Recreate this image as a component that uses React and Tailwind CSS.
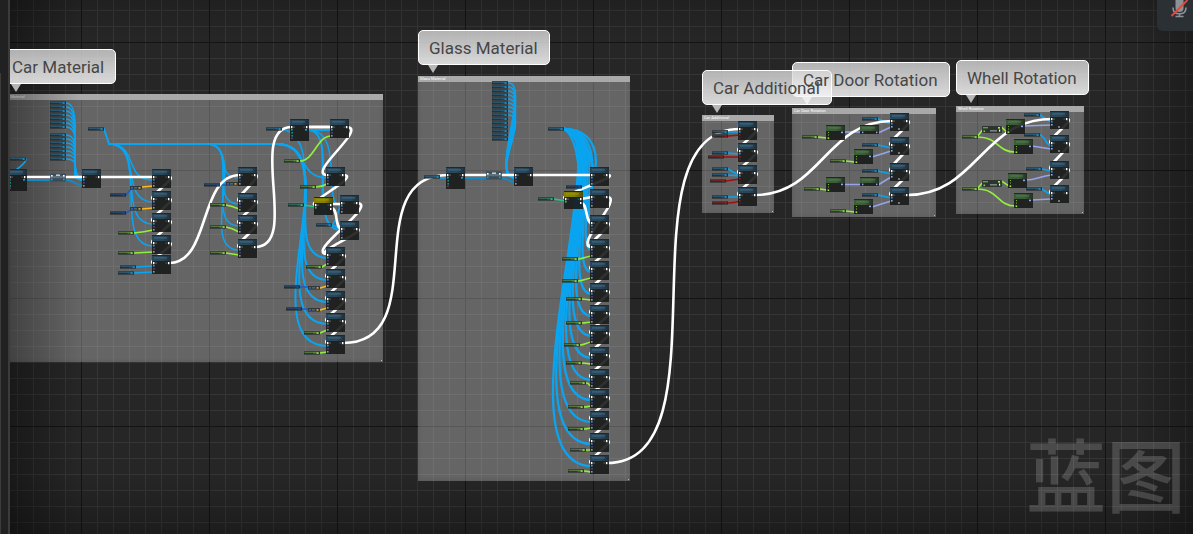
import React from "react";

const BLUE = "#0aa4f0";
const GREEN = "#92ee3c";
const YELLOW = "#f5b921";
const NAVY = "#1f5cc0";
const RED = "#a30d10";
const TEAL = "#22c58c";
const LILAC = "#97a4ea";
const WHITE = "#ffffff";

const comments = [
  { title: "Car Material", box: "left-[1px] top-[94px] w-[382px] h-[268px]", bubble: "left-[1px] top-[49px]" },
  { title: "Glass Material", box: "left-[418px] top-[76px] w-[212px] h-[405px]", bubble: "left-[418px] top-[30px]" },
  { title: "Car Door Rotation", box: "left-[792px] top-[108px] w-[144px] h-[109px]", bubble: "left-[792px] top-[62px]" },
  { title: "Car Additional", box: "left-[702px] top-[115px] w-[72px] h-[98px]", bubble: "left-[702px] top-[70px]" },
  { title: "Whell Rotation", box: "left-[956px] top-[106px] w-[128px] h-[108px]", bubble: "left-[956px] top-[60px]" },
];

const steps = (from, count) => Array.from({ length: count }, (_, i) => from + i * 4);

// Green inputs of the long glass column: getter x, getter y, node y
const glassInputs = [
  [562, 257, 239], [562, 279, 261], [566, 297, 283], [566, 321, 305], [564, 343, 325],
  [566, 361, 347], [570, 381, 369], [568, 405, 389], [568, 427, 411], [570, 448, 433], [568, 469, 455],
];
const glassRows = [167, 189, 215, 239, 261, 283, 305, 325, 347, 369, 389, 411, 433, 455];

// x, y, height, kind
const nodes = [
  [8, 169, 22, "tall"], [82, 169, 19, "call"],
  ...[169, 191, 213, 235, 255].map((y) => [152, y, 19, "call"]),
  ...[167, 193, 215, 239].map((y) => [238, y, 19, "call"]),
  [290, 119, 22, "tall"], [330, 119, 19, "call"], [326, 167, 19, "call"],
  [314, 197, 18, "branch"], [340, 195, 19, "call"], [340, 221, 19, "call"],
  ...[247, 269, 291, 313, 335].map((y) => [326, y, 19, "call"]),
  [446, 167, 22, "tall"], [514, 167, 19, "call"], [564, 191, 18, "branch"],
  ...glassRows.map((y) => [590, y, 19, "call"]),
  ...[121, 143, 165, 187].map((y) => [738, y, 19, "red"]),
  ...[113, 137, 163, 187].map((y) => [890, y, 18, "rotate"]),
  ...[111, 135, 161, 185].map((y) => [1050, y, 18, "rotate"]),
  [826, 125, 15, "make"], [860, 125, 9, "pure"], [854, 149, 15, "make"],
  [826, 177, 15, "make"], [860, 177, 9, "pure"], [854, 199, 15, "make"],
  [1006, 119, 15, "make"], [1014, 139, 15, "make"],
  [1008, 173, 15, "make"], [1014, 193, 15, "make"],
];

// x, y, colour
const getters = [
  ...[...steps(101, 7), ...steps(133, 7)].map((y) => [50, y, "blue"]),
  ...steps(81, 15).map((y) => [492, y, "blue"]),
  ...glassInputs.map(([x, y]) => [x, y, "green"]),
  [88, 127, "blue"], [10, 157, "blue"], [110, 193, "navy"], [110, 211, "navy"],
  [118, 231, "green"], [118, 251, "green"], [120, 265, "blue"], [118, 271, "blue"],
  [204, 183, "navy"], [210, 203, "green"], [210, 225, "green"], [210, 251, "green"],
  [266, 127, "blue"], [284, 159, "green"], [300, 185, "green"], [288, 203, "teal"],
  [316, 223, "blue"], [306, 265, "green"], [284, 285, "navy"], [286, 307, "navy"],
  [304, 331, "green"], [304, 351, "green"],
  [548, 127, "blue"], [424, 175, "blue"], [566, 185, "navy"], [538, 197, "teal"],
  [712, 130, "blue"], [712, 134, "red"], [712, 151, "blue"], [708, 155, "red"],
  [712, 167, "blue"], [712, 173, "blue"], [710, 179, "red"], [712, 195, "blue"], [712, 201, "red"],
  [862, 117, "blue"], [862, 143, "blue"], [862, 169, "blue"], [862, 193, "blue"],
  [802, 135, "green"], [830, 159, "green"], [804, 187, "green"], [830, 209, "green"],
  [1024, 113, "blue"], [1024, 133, "blue"], [1026, 167, "blue"], [1026, 187, "blue"],
  [962, 135, "green"], [962, 187, "green"],
];

const converters = [[130, 186], [130, 207], [226, 182], [308, 286], [308, 308]];

const wire = (x1, y1, x2, y2, k1, k2 = k1) =>
  `M${x1} ${y1}C${x1 + k1} ${y1} ${x2 - k2} ${y2} ${x2} ${y2}`;

const chain = (x, rows, off = 8) =>
  rows.slice(1).map((y, i) => [wire(x + 17, rows[i] + off, x + 2, y + off, 10), WHITE, 2.6]);

const wires = [
  // data: car material
  ...[...steps(103, 7), ...steps(135, 7)].map((y) => [wire(66, y, 84, 180, 20), BLUE, 1.4]),
  ["M104 129L109 144", BLUE, 2],
  ["M109 144H282", BLUE, 1.8],
  [wire(109, 144, 153, 180, 30), BLUE, 1.5], [wire(109, 144, 153, 202, 34), BLUE, 1.5],
  [wire(109, 144, 153, 224, 38), BLUE, 1.5], [wire(109, 144, 153, 246, 42), BLUE, 1.5],
  ["M26 159C26 163 21 166 17 169", BLUE, 1.6],
  ["M27 180H51", "#148ac4", 2], [wire(66, 180, 84, 186, 8), "#148ac4", 2],
  ["M126 195L131 189", NAVY, 1.6], ["M126 213L131 210", NAVY, 1.6],
  ["M142 187L153 186", YELLOW, 1.7], ["M142 209L153 208", YELLOW, 1.7],
  ["M134 233Q144 232 153 230", GREEN, 1.7], ["M134 253L153 252", GREEN, 1.7],
  ["M136 267L153 266", BLUE, 1.7], ["M134 273L153 272", BLUE, 1.7],
  [wire(207, 144, 239, 178, 26), BLUE, 1.5], [wire(207, 144, 239, 204, 32), BLUE, 1.5],
  [wire(207, 144, 239, 226, 36), BLUE, 1.5], [wire(207, 144, 239, 250, 42), BLUE, 1.5],
  ["M220 185H226", NAVY, 1.6], ["M238 184L240 184", YELLOW, 1.7],
  ["M226 205Q232 206 239 209", GREEN, 1.7], ["M226 227Q232 228 239 232", GREEN, 1.7],
  ["M226 253L239 255", GREEN, 1.7],
  [wire(277, 144, 328, 178, 32), BLUE, 1.6], [wire(277, 144, 328, 258, 58, 50), BLUE, 2],
  [wire(277, 144, 328, 280, 62, 56), BLUE, 2], [wire(277, 144, 328, 302, 66, 62), BLUE, 2],
  [wire(277, 144, 328, 324, 70, 70), BLUE, 2], [wire(277, 144, 328, 346, 73, 80), BLUE, 2],
  ["M282 129Q288 130 292 134C300 140 303 150 304 160", BLUE, 1.6],
  ["M308 130H331", BLUE, 2],
  [wire(308, 130, 341, 230, 32, 36), BLUE, 2], [wire(308, 130, 341, 206, 38, 20), BLUE, 1.5],
  ["M332 225Q337 226 341 230", BLUE, 2], ["M332 225C337 222 337 210 341 206", BLUE, 1.5],
  [wire(300, 161, 331, 136, 14), GREEN, 1.7], ["M316 187Q322 187 327 184", GREEN, 1.7],
  ["M304 205L316 207", TEAL, 1.6], ["M322 267L327 264", GREEN, 1.7],
  ["M300 287H309", NAVY, 1.6], ["M302 309H309", NAVY, 1.6],
  ["M320 288L327 286", YELLOW, 1.7], ["M320 310L327 308", YELLOW, 1.7],
  ["M320 333L327 330", GREEN, 1.7], ["M320 353L327 352", GREEN, 1.7],
  // data: glass material
  ...steps(83, 9).map((y) => [wire(508, y, 516, 178, 24, 28), BLUE, 1.6]),
  ...glassRows.map((y, i) => [wire(564, 129, 592, y + 11, 42 + (i * 12) / 13, -4 + (i * 102) / 13), BLUE, 2.3]),
  ["M564 129C580 131 588 142 594 172", BLUE, 2.3], ["M564 129C576 133 582 148 586 190", BLUE, 2.3],
  ["M564 129C574 135 578 150 582 200", BLUE, 2.3],
  ["M440 178L447 178", BLUE, 1.5], ["M465 178H487", "#148ac4", 2],
  [wire(502, 178, 516, 183, 6), "#148ac4", 2], ["M554 199L566 201", TEAL, 1.6],
  ...glassInputs.map(([x, gy, ny]) => [wire(x + 16, gy + 2, 592, ny + 17, 5), GREEN, 1.7]),
  // data: car additional
  ["M728 132H740", BLUE, 1.7], ["M728 136L740 135", RED, 1.7],
  ["M728 153L740 154", BLUE, 1.7], ["M724 157H740", RED, 1.7],
  ["M728 169L740 176", BLUE, 1.7], ["M728 175L740 176", BLUE, 1.7], ["M726 181L740 179", RED, 1.7],
  ["M728 197H740", BLUE, 1.7], ["M728 203Q734 203 740 201", RED, 1.7],
  // data: door rotation
  ["M878 119L891 124", BLUE, 1.7], ["M878 145L891 148", BLUE, 1.7],
  ["M878 171L891 174", BLUE, 1.7], ["M878 195L891 198", BLUE, 1.7],
  ["M844 132H861", LILAC, 1.5], ["M878 133L891 127", LILAC, 1.5], ["M872 157L891 151", LILAC, 1.5],
  ["M844 184.500H861", LILAC, 1.5], ["M878 185L891 177", LILAC, 1.5], ["M872 207L891 201", LILAC, 1.5],
  ["M818 137L827 138", GREEN, 1.7], ["M846 161L855 162", GREEN, 1.7],
  ["M820 189L827 190", GREEN, 1.7], ["M846 211L855 212", GREEN, 1.7],
  // data: wheel rotation
  ["M1040 115L1051 122", BLUE, 1.7], [wire(1040, 135, 1051, 146, 4), BLUE, 1.7],
  ["M1042 169L1051 171", BLUE, 1.7], ["M1042 189L1051 195", BLUE, 1.7],
  ["M1024 126L1051 125", LILAC, 1.5], ["M1032 146L1051 149", LILAC, 1.5],
  ["M1026 180C1036 180 1040 176 1051 175", LILAC, 1.5], ["M1032 200L1051 199", LILAC, 1.5],
  ["M977 137L984 128", GREEN, 1.7], ["M1000 127C1004 127 1003 131 1008 132", GREEN, 1.7],
  [wire(977, 137, 1015, 152, 22, 18), GREEN, 1.7],
  ["M977 189L984 181", GREEN, 1.7], ["M1000 181C1004 181 1005 185 1010 186", GREEN, 1.7],
  [wire(977, 189, 1015, 206, 22, 18), GREEN, 1.7],
  // execution
  ["M27 177H84", WHITE, 2.6], ["M100 177H154", WHITE, 2.6],
  ...chain(152, [169, 191, 213, 235, 255]),
  [wire(169, 263, 240, 175, 42), WHITE, 2.6],
  ...chain(238, [167, 193, 215, 239]),
  [wire(255, 247, 292, 127, 46), WHITE, 2.6],
  ["M308 127H332", WHITE, 2.8],
  [wire(346, 127, 328, 175, 24), WHITE, 2.6], [wire(343, 175, 316, 205, 20, 14), WHITE, 2.6],
  ["M331 204H342", WHITE, 2.6], [wire(331, 208, 342, 229, 8), WHITE, 2.6],
  [wire(356, 203, 328, 254, 26, 26), WHITE, 2.6], [wire(356, 229, 328, 254, 16, 18), WHITE, 2.6],
  ...chain(326, [247, 269, 291, 313, 335]),
  [wire(343, 343, 448, 175, 92), WHITE, 2.6],
  ["M464 175H516", WHITE, 2.6], ["M531 175H592", WHITE, 2.6],
  [wire(607, 175, 566, 198, 18, 14), WHITE, 2.6],
  ["M581 199L592 197", WHITE, 2.6], [wire(581, 203, 592, 223, 7), WHITE, 2.6],
  [wire(607, 197, 592, 247, 18, 20), WHITE, 2.6], [wire(607, 223, 592, 247, 10), WHITE, 2.6],
  ...chain(590, glassRows.slice(3)),
  [wire(607, 463, 740, 129, 124), WHITE, 2.6],
  ...chain(738, [121, 143, 165, 187]),
  [wire(755, 195, 892, 121, 66), WHITE, 2.6],
  ...chain(890, [113, 137, 163, 187]),
  [wire(907, 195, 1052, 119, 70), WHITE, 2.6],
  ...chain(1050, [111, 135, 161, 185]),
];

const tones = {
  blue: ["#2c566f", BLUE], green: ["#55793d", "#a4f04a"], navy: ["#2a4262", "#1b4fa8"],
  teal: ["#2d6a58", "#2fd39b"], red: ["#6d2424", "#b80f10"],
};

const Pin = ({ x, y, fill, w = 1.6, h = 1.6 }) => <rect x={x} y={y} width={w} height={h} fill={fill} />;

function Node({ x, y, h, kind }) {
  const head = kind === "branch" ? "url(#head-yellow)" : kind === "make" || kind === "pure" ? "url(#head-green)" : "url(#head-blue)";
  const green = kind === "make" || kind === "pure";
  return (
    <g transform={`translate(${x} ${y})`}>
      <rect width="19" height={h} fill="#171b19" opacity="0.9" />
      <rect y="1" width="19" height="5" fill={head} />
      <rect y="2.200" x="2" width="13" height="1.400" fill={kind === "branch" ? "#a8a00c" : green ? "#5c8756" : "#477795"} opacity="0.6" />
      <rect width="19" height="1" fill="#20282c" />
      {!green && (
        <>
          <Pin x={1} y={7} w={1.4} h={2.2} fill="#fff" />
          <rect x="3" y="7.500" width="2" height="1.200" fill="#6d7070" opacity="0.7" />
          <rect x="13.500" y="7.500" width="2" height="1.200" fill="#6d7070" opacity="0.6" />
          <Pin x={16} y={7} w={1.4} h={2.2} fill="#fff" />
        </>
      )}
      {kind === "call" && (<><Pin x={1} y={10} fill={BLUE} /><Pin x={1.4} y={13} fill="#81459a" w={1.2} /><Pin x={1} y={16} fill="#71a9a0" /></>)}
      {kind === "tall" && (<><Pin x={1} y={10} fill={BLUE} /><Pin x={15} y={10} fill={BLUE} w={2} /><Pin x={1.4} y={13} fill="#208c70" /><Pin x={1.4} y={16} fill="#208c70" /><Pin x={1.4} y={18.500} fill="#81459a" w={1.2} /></>)}
      {kind === "branch" && (<><Pin x={1} y={10} fill={TEAL} /><Pin x={16} y={11} w={1.4} h={2} fill="#fff" /></>)}
      {kind === "red" && (<><Pin x={1} y={10} fill={BLUE} /><Pin x={1} y={13} fill="#b01313" /><Pin x={1.4} y={16} fill="#7a1717" w={1.2} /></>)}
      {kind === "rotate" && (<><Pin x={1} y={10} fill={BLUE} /><Pin x={1} y={13} fill={LILAC} /><Pin x={8} y={15.500} fill="#c8cbcb" w={2} h={1} /></>)}
      {kind === "make" && (<><Pin x={2} y={7} fill="#77ba36" w={1} h={1} /><Pin x={2} y={9.500} fill="#77ba36" w={1} h={1} /><Pin x={1.6} y={12.400} fill="#9be842" /><Pin x={15} y={6.600} fill={LILAC} w={2} /></>)}
      {kind === "pure" && (<><Pin x={2} y={6.600} fill={LILAC} w={1.4} /><Pin x={16} y={6.600} fill={LILAC} w={1.4} /></>)}
    </g>
  );
}

const Getter = ({ x, y, tone }) => (
  <g transform={`translate(${x} ${y})`}>
    <rect width="16" height="3.600" fill="#1c2326" opacity="0.88" />
    <rect y="0.800" x="0.500" width="14" height="1.400" fill={tones[tone][0]} opacity="0.95" />
    <rect width="16" height="0.800" fill="#3f484c" />
    <rect x="9.500" y="1.600" width="2" height="1" fill={tones[tone][1]} opacity="0.35" />
    <rect x="12.500" y="1.400" width="2.200" height="1.400" fill={tones[tone][1]} />
  </g>
);

const Converter = ({ x, y }) => (
  <g transform={`translate(${x} ${y})`}>
    <rect width="12" height="3.600" fill="#30383c" />
    <rect y="1.200" x="1" width="2" height="1.400" fill="#2b6ee0" />
    <rect y="1" x="4" width="3" height="1.600" fill="#55636b" />
    <rect y="1.200" x="8.500" width="2" height="1.400" fill={YELLOW} />
  </g>
);

const Loop = ({ x, y }) => (
  <g transform={`translate(${x} ${y})`}>
    <rect width="16" height="8.500" rx="1" fill="#2f4756" opacity="0.78" />
    <rect width="16" height="1" fill="#47565f" />
    <rect x="6" y="1.500" width="4" height="1.400" fill="#d5dde1" />
    <Pin x={1} y={2} fill="#fff" /><Pin x={13} y={2} fill="#fff" />
    <Pin x={1} y={5.600} fill={BLUE} /><Pin x={13} y={5.600} fill={BLUE} />
  </g>
);

const Operator = ({ x, y }) => (
  <g transform={`translate(${x} ${y})`}>
    <rect width="20" height="7" rx="1" fill="#26302a" opacity="0.92" />
    <rect x="1" y="1" width="5" height="1.400" fill="#6f9a48" />
    <Pin x={1.500} y={4.500} fill="#86cf3a" /><Pin x={16} y={1} fill="#a4f04a" w={2} />
    <rect x="8" y="4" width="7" height="1.600" fill="#7d837f" />
    <Pin x={17} y={3.600} fill="#fff" w={1.2} h={2} />
  </g>
);

function Graph() {
  const head = (id, a, b) => (
    <linearGradient id={id}>
      <stop offset="0" stopColor={a} />
      <stop offset="0.550" stopColor={a} />
      <stop offset="1" stopColor={b} />
    </linearGradient>
  );
  return (
    <svg className="absolute top-0 left-0 h-[534px] w-[1193px] overflow-visible" viewBox="0 0 1193 534" role="img" aria-label="Node graph">
      <defs>
        {head("head-blue", "#2a4759", "#202e37")}
        {head("head-green", "#3c5c3a", "#232f24")}
        {head("head-yellow", "#858006", "#4c4a0c")}
      </defs>
      <g fill="none" strokeLinecap="round">
        {wires.map(([d, stroke, w], i) => <path key={i} d={d} stroke={stroke} strokeWidth={w} />)}
      </g>
      {getters.map(([x, y, tone], i) => <Getter key={i} x={x} y={y} tone={tone} />)}
      {converters.map(([x, y], i) => <Converter key={i} x={x} y={y} />)}
      <Loop x={50} y={173} />
      <Loop x={486} y={171} />
      <Operator x={982} y={126} />
      <Operator x={982} y={180} />
      {nodes.map(([x, y, h, kind], i) => <Node key={i} x={x} y={y} h={h} kind={kind} />)}
    </svg>
  );
}

function CommentBox({ title, box }) {
  return (
    <section aria-label={title} className={`absolute bg-white/[0.29] shadow-[inset_0_0_4px_rgba(0,0,0,0.12)] ${box}`}>
      <div className="h-[6px] overflow-hidden bg-[#a9a9a9] pl-[2px] text-[4px] leading-[5px] whitespace-nowrap text-white">{title}</div>
      <span className="absolute right-px bottom-px size-px bg-[#bbb]" />
    </section>
  );
}

function Bubble({ title, bubble }) {
  return (
    <div className={`absolute h-[35px] rounded-[5px] border border-white bg-linear-to-b from-[#d6d6d6]/80 to-white/82 pr-[11px] pl-[10px] text-[17px] leading-[34px] whitespace-nowrap text-[#464646] ${bubble}`}>
      <span className="relative z-10">{title}</span>
      <svg className="absolute top-[34px] left-[9px] h-[8px] w-[10px]" viewBox="0 0 10 8" aria-hidden="true">
        <path d="M0 0H10L5 8Z" fill="#dcdcdc" opacity="0.8" />
      </svg>
    </div>
  );
}

export default function App() {
  return (
    <div className="flex h-screen overflow-hidden bg-[#262626] font-['Roboto','Noto_Sans_CJK_SC',sans-serif]">
      <aside className="flex w-[10px] shrink-0 border-r-2 border-[#3b3b3b] bg-[#212121]">
        <div className="mt-[73px] w-px bg-[#3c3c3c]" />
      </aside>
      <main className="relative flex-1 overflow-hidden">
        <div className="absolute inset-y-0 right-0 -left-[10px] bg-[linear-gradient(90deg,#141414_1px,transparent_1px),linear-gradient(#141414_1px,transparent_1px),linear-gradient(90deg,#353535_1px,transparent_1px),linear-gradient(#353535_1px,transparent_1px)] bg-size-[128px_128px,128px_128px,16px_16px,16px_16px] bg-position-[81px_0,0_42px,1px_0,0_10px]">
          {comments.map((c) => <CommentBox key={c.title} {...c} />)}
          <div className="absolute inset-0 bg-[linear-gradient(90deg,rgba(0,0,0,0.35)_10px,transparent_80px),linear-gradient(0deg,rgba(0,0,0,0.25),transparent_60px),linear-gradient(270deg,rgba(0,0,0,0.25),transparent_60px),linear-gradient(rgba(0,0,0,0.15),transparent_40px)]" />
          <Graph />
          {comments.map((c) => <Bubble key={c.title} {...c} />)}
        </div>
        <p className="absolute right-[7px] bottom-[18px] font-['Noto_Sans_CJK_SC',sans-serif] text-[80px] leading-[90px] font-medium text-white/[0.17]">蓝图</p>
        <button type="button" aria-label="Microphone muted" className="absolute top-0 right-0 h-[31px] w-[36px] rounded-bl-[6px] bg-[#2b3034]">
          <svg className="absolute top-0 left-[10px] h-[20px] w-[24px]" viewBox="0 0 24 20" fill="none">
            <rect x="8.500" y="-6" width="8" height="18" rx="4" fill="#8d9195" />
            <path d="M6 7.500C6 12 8.500 13.800 12.500 13.800S19 12 19 7.500M12.500 13.800V16M8.500 16.500H16.500" stroke="#8d9195" strokeWidth="1.600" />
            <path d="M4.500 16L20.500 0" stroke="#e5483c" strokeWidth="1.800" />
          </svg>
        </button>
      </main>
    </div>
  );
}
